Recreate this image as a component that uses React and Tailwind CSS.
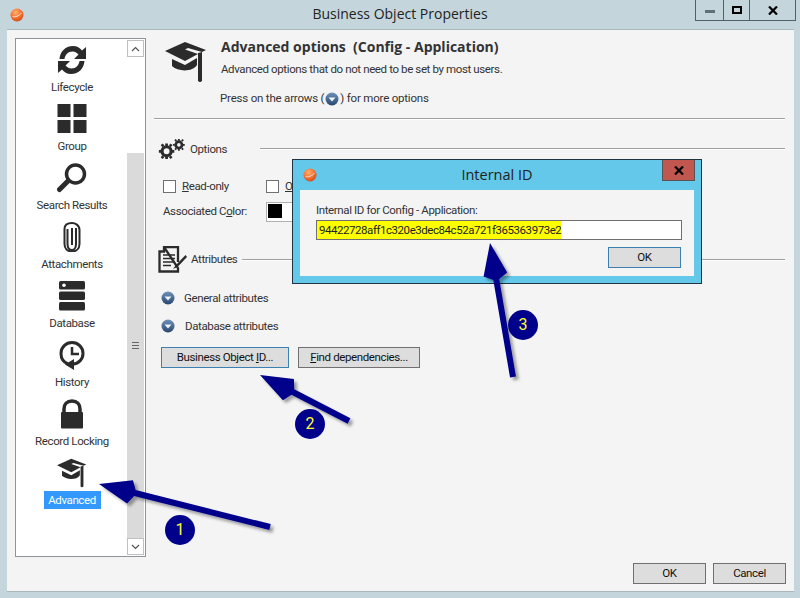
import React from "react";

const sans = "font-['Roboto',Arial,sans-serif]";

function Logo() {
  return (
    <svg width="14" height="14" viewBox="0 0 14 14">
      <defs>
        <radialGradient id="lg" cx="0.4" cy="0.3" r="0.8">
          <stop offset="0" stopColor="#ffb070" />
          <stop offset="0.6" stopColor="#f0682a" />
          <stop offset="1" stopColor="#c0481a" />
        </radialGradient>
      </defs>
      <circle cx="7" cy="7" r="6.5" fill="url(#lg)" />
      <path d="M2.5 8.5C5 9.5 9 8 11.5 5" stroke="#ffe2c8" strokeWidth="1" fill="none" />
    </svg>
  );
}

function Cap({ size = 30 }) {
  return (
    <svg width={size} height={size} viewBox="0 0 42 42" fill="#2b2b2b">
      <path d="M0 10 L20 1 L41 9 L37 11 L23 7 L20 8.5 L33 13 L20 20 Z" />
      <path d="M7 18 L20 24 L32 17 L32 24 C28 31 13 31 7 25 Z" />
      <path d="M33 12 L37 11 L37 40 Q35 42 33 40 Z" />
    </svg>
  );
}

const icons = {
  cycle: (
    <svg width="30" height="30" viewBox="0 0 30 30" fill="#2b2b2b">
      <path d="M2.500 14C3 7 8 1 16 1C20 1 23 3 25 5.500L29 2V14H17L21.500 9.500C19.500 7.500 18 6.500 15.500 6.500C11 6.500 8 10 7.500 14Z" />
      <path d="M27.500 16C27 23 22 29 14 29C10 29 7 27 5 24.500L1 28V16H13L8.500 20.500C10.500 22.500 12 23.500 14.500 23.500C19 23.500 22 20 22.500 16Z" />
    </svg>
  ),
  group: (
    <svg width="30" height="30" viewBox="0 0 30 30" fill="#2b2b2b">
      <rect x="0.500" y="0" width="13" height="13" />
      <rect x="16.500" y="0" width="13" height="13" />
      <rect x="0.500" y="16" width="13" height="13" />
      <rect x="16.500" y="16" width="13" height="13" />
    </svg>
  ),
  search: (
    <svg width="30" height="30" viewBox="0 0 30 30" fill="none" stroke="#2b2b2b">
      <circle cx="18.500" cy="11" r="9" strokeWidth="3.500" />
      <path d="M11 18L2.500 26.500" strokeWidth="5" strokeLinecap="round" />
    </svg>
  ),
  clip: (
    <svg width="30" height="30" viewBox="0 0 30 30" fill="none" stroke="#2b2b2b" strokeWidth="2">
      <path d="M19 6V22C19 26 17 28 15 28C12 28 10.500 26 10.500 22V7" />
      <path d="M15 1C18 1 22.500 3 22.500 8V22C22.500 27 19 29.500 15 29.500C10 29.500 7.500 26 7.500 22V7C7.500 3 10 1 15 1" />
      <path d="M15 6V23" />
    </svg>
  ),
  db: (
    <svg width="30" height="30" viewBox="0 0 30 30" fill="#2b2b2b">
      <rect x="2" y="0" width="26" height="8.500" rx="1.500" />
      <rect x="2" y="10.500" width="26" height="8.500" rx="1.500" />
      <rect x="2" y="21" width="26" height="8.500" rx="1.500" />
      <circle cx="7" cy="4.200" r="1.800" fill="#fff" />
    </svg>
  ),
  history: (
    <svg width="30" height="30" viewBox="0 0 30 30" fill="none" stroke="#2b2b2b">
      <path d="M11 24C6 22 4 18 4 13.500C4 7 9 2.500 15 2.500C21 2.500 26 7 26 13.500C26 19 22 23.500 16 24" strokeWidth="3" />
      <path d="M15 7V14H22" strokeWidth="2.500" />
      <path d="M17 19V30L8 24.500Z" fill="#2b2b2b" stroke="none" />
    </svg>
  ),
  lock: (
    <svg width="30" height="30" viewBox="0 0 30 30" fill="#2b2b2b">
      <path d="M7 14V10C7 5 10 2 15 2C20 2 23 5 23 10V14" fill="none" stroke="#2b2b2b" strokeWidth="3.500" />
      <rect x="4" y="13" width="22" height="16.500" rx="1" />
    </svg>
  ),
  cap: <Cap />,
};

const nav = [
  ["cycle", "Lifecycle"],
  ["group", "Group"],
  ["search", "Search Results"],
  ["clip", "Attachments"],
  ["db", "Database"],
  ["history", "History"],
  ["lock", "Record Locking"],
];

function Expander({ className = "" }) {
  return (
    <svg width="14" height="14" viewBox="0 0 14 14" className={`shrink-0 ${className}`}>
      <defs>
        <linearGradient id="ex" x1="0" y1="0" x2="0" y2="1">
          <stop offset="0" stopColor="#6f93bd" />
          <stop offset="1" stopColor="#27466e" />
        </linearGradient>
      </defs>
      <circle cx="7" cy="7" r="6.500" fill="url(#ex)" />
      <path d="M3.500 5.500H10.500L7 9.500Z" fill="#eef3f8" />
    </svg>
  );
}

function Gears() {
  return (
    <svg width="29" height="20" viewBox="0 0 30 22" fill="#2b2b2b">
      <g>
        <circle cx="8.500" cy="13.500" r="5" fill="none" stroke="#2b2b2b" strokeWidth="3.500" />
        <path d="M7 5h3v3H7zM7 19h3v3H7zM0 12h3v3H0zM14 12h3v3h-3zM2 7l2-2 2 2-2 2zM11 7l2-2 2 2-2 2zM2 20l2-2 2 2-2 2zM11 20l2-2 2 2-2 2z" />
      </g>
      <g>
        <circle cx="22" cy="6.500" r="3.500" fill="none" stroke="#2b2b2b" strokeWidth="3" />
        <path d="M21 0h2v2h-2zM21 11h2v2h-2zM15.500 5.500h2v2h-2zM26.500 5.500h2v2h-2zM17 1.500l1.500-1.500 1.500 1.500-1.500 1.500zM24.500 1.500L26 0l1.500 1.500L26 3zM17 11l1.500-1.500L20 11l-1.500 1.500zM24.500 11L26 9.500l1.500 1.500L26 12.500z" />
      </g>
    </svg>
  );
}

function Doc() {
  return (
    <svg width="29" height="27" viewBox="0 0 29 27" fill="none" stroke="#2b2b2b">
      <path d="M6 1H20V16M20 22V25.500H1.500V5.500H6V1Z M6 1V5.500H1.500" strokeWidth="2.300" />
      <path d="M5 9H17M5 12.500H17M5 16H15M5 19.500H13" strokeWidth="1.500" />
      <path d="M27.500 9L18 19L15 23L19.500 21L29 11Z" fill="#2b2b2b" stroke="none" />
    </svg>
  );
}

function Btn({ children, className = "" }) {
  return (
    <div className={`flex items-center justify-center h-[21px] bg-[#dddddd] border text-[11.5px] text-[#111] ${className}`}>
      <span>{children}</span>
    </div>
  );
}

function Section({ icon, label, labelClass, iconClass, rowClass }) {
  return (
    <div className={`flex items-center ${rowClass}`}>
      <div className={`flex shrink-0 ${iconClass}`}>{icon}</div>
      <span className={`text-[11.5px] text-[#333] shrink-0 ${labelClass}`}>{label}</span>
      <div className="flex-1 h-[2px] bg-[#a0a0a0] border-b border-white" />
    </div>
  );
}

function Arrow({ x1, y1, x2, y2 }) {
  const dx = x2 - x1, dy = y2 - y1;
  const len = Math.hypot(dx, dy);
  const ux = dx / len, uy = dy / len;
  const nx = -uy, ny = ux;
  const hl = 37, hw = 12, sw = 3;
  const bx = x2 - ux * hl, by = y2 - uy * hl;
  const neck = `${bx + nx * sw},${by + ny * sw}`;
  const neck2 = `${bx - nx * sw},${by - ny * sw}`;
  const pts = [
    `${x1 + nx * sw},${y1 + ny * sw}`,
    neck,
    `${bx + ux * 5 + nx * hw},${by + uy * 5 + ny * hw}`,
    `${x2},${y2}`,
    `${bx + ux * 5 - nx * hw},${by + uy * 5 - ny * hw}`,
    neck2,
    `${x1 - nx * sw},${y1 - ny * sw}`,
  ].join(" ");
  return <polygon points={pts} fill="#00008b" filter="url(#arrowShadow)" />;
}

function Badge({ n, className }) {
  return (
    <div className={`absolute w-[30px] h-[30px] rounded-full bg-[#00008b] text-[#ffff33] text-[16px] tracking-normal flex items-center justify-center ${className}`}>
      {n}
    </div>
  );
}

export default function App() {
  return (
    <div className={`relative w-[800px] h-[598px] overflow-hidden bg-[#c4d6dc] ${sans} tracking-[-0.38px] flex flex-col`}>
      {/* title bar */}
      <div className="relative h-[29px] shrink-0 flex items-center">
        <div className="ml-[10px] flex"><Logo /></div>
        <div className="absolute inset-x-0 top-[4px] text-center text-[14px] tracking-normal leading-[20px] text-[#222] font-['Open_Sans',sans-serif]">
          Business Object Properties
        </div>
        <div className="absolute right-[4px] top-0 flex h-[21px] border border-t-0 border-[#555f66]">
          <div className="w-[28px] flex items-center justify-center border-r border-[#555f66]">
            <div className="w-[10px] h-[3px] mt-[3px] bg-[#5f7076]" />
          </div>
          <div className="w-[26px] flex items-center justify-center border-r border-[#555f66]">
            <div className="w-[10px] h-[8px] border-2 border-black" />
          </div>
          <div className="w-[45px] flex items-center justify-center">
            <svg width="10" height="9" viewBox="0 0 10 9"><path d="M1 0.500L9 8.500M9 0.500L1 8.500" stroke="#000" strokeWidth="2.200" /></svg>
          </div>
        </div>
      </div>

      {/* client */}
      <div className="ml-[7px] mr-[6px] h-[562px] bg-[#f4f4f4] border-t border-[#a9b9bf] shadow-[0_1px_0_#aab8bd] flex pl-[8px] pt-[8px]">
        {/* sidebar */}
        <div className="w-[131px] h-[519px] bg-white border border-[#8c9599] flex shrink-0">
          <div className="flex-1 flex flex-col items-center pt-[6px] pl-[1px]">
            {nav.map(([k, l]) => (
              <div key={k} className="h-[59px] flex flex-col items-center shrink-0">
                <div className="h-[30px] flex">{icons[k]}</div>
                <div className="mt-[5px] text-[11.5px] leading-[14px] text-[#333] whitespace-nowrap">{l}</div>
              </div>
            ))}
            <div className="flex flex-col items-center">
              <div className="h-[30px] flex">{icons.cap}</div>
              <div className="mt-[3px] w-[57px] text-center text-[11.5px] leading-[18px] bg-[#3399ff] text-white">Advanced</div>
            </div>
          </div>
          <div className="w-[17px] mt-[1px] mr-[1px] mb-[1px] flex flex-col shrink-0">
            <div className="h-[17px] border border-[#c0c0c0] flex items-center justify-center">
              <svg width="9" height="6" viewBox="0 0 9 6"><path d="M1 5L4.500 1.500L8 5" stroke="#555" strokeWidth="1.200" fill="none" /></svg>
            </div>
            <div className="h-[96px] bg-white" />
            <div className="flex-1 bg-[#dadada] flex items-center justify-center">
              <div className="w-[7px] h-[7px] border-y-[1px] border-[#666] flex items-center"><div className="w-full h-[1px] bg-[#666]" /></div>
            </div>
            <div className="h-[17px] border border-[#c0c0c0] flex items-center justify-center">
              <svg width="9" height="6" viewBox="0 0 9 6"><path d="M1 1L4.500 4.500L8 1" stroke="#555" strokeWidth="1.200" fill="none" /></svg>
            </div>
          </div>
        </div>

        {/* right pane */}
        <div className="relative flex-1 flex flex-col pl-[8px] pr-[9px]">
          <div className="flex h-[80px] shrink-0">
            <div className="ml-[11px] mt-[3px] flex"><Cap size={42} /></div>
            <div className="ml-[14px] flex flex-col">
              <div className="text-[14px] tracking-normal leading-[17px] font-bold font-['Open_Sans',sans-serif] text-[#333] whitespace-pre">Advanced options  (Config - Application)</div>
              <div className="mt-[7px] text-[11.5px] leading-[15px] text-[#333]">Advanced options that do not need to be set by most users.</div>
              <div className="mt-[14px] -ml-[1px] text-[11.5px] tracking-[-0.2px] leading-[15px] text-[#333] whitespace-pre">
                Press on the arrows (<Expander className="inline-block align-[-4px] mx-[1px]" />) for more options
              </div>
            </div>
          </div>
          <div className="h-[2px] bg-[#a0a0a0] border-b border-white shrink-0" />

          <Section icon={<Gears />} label="Options" iconClass="ml-[4px] mr-[3px]" labelClass="w-[70px] mt-[1px]" rowClass="mt-[19px] h-[20px]" />

          <div className="mt-[21px] ml-[9px] flex items-center h-[13px] text-[11.5px] text-[#333]">
            <div className="w-[13px] h-[13px] bg-white border border-[#707070] shrink-0" />
            <span className="ml-[6px] w-[84px]"><u>R</u>ead-only</span>
            <div className="w-[13px] h-[13px] bg-white border border-[#707070] shrink-0" />
            <span className="ml-[6px]"><u>O</u>verride</span>
          </div>

          <div className="mt-[9px] ml-[9px] flex items-center h-[20px] text-[11.5px] text-[#333]">
            <span className="w-[103px]">Associated C<u>o</u>lor:</span>
            <div className="w-[130px] h-[20px] bg-white border border-[#b0b0b0] pl-[1px] pt-[1px]">
              <div className="w-[14px] h-[14px] bg-black" />
            </div>
          </div>

          <Section icon={<Doc />} label="Attributes" iconClass="ml-[4px] mr-[4px]" labelClass="w-[51px]" rowClass="mt-[24px] h-[27px]" />

          <div className="mt-[18px] ml-[7px] flex items-center h-[14px] text-[11.5px] leading-[15px] text-[#333]">
            <Expander />
            <span className="ml-[9px]">General attributes</span>
          </div>
          <div className="mt-[14px] ml-[7px] flex items-center h-[14px] text-[11.5px] leading-[15px] text-[#333]">
            <Expander />
            <span className="ml-[10px]">Database attributes</span>
          </div>

          <div className="mt-[14px] ml-[7px] flex gap-[9px]">
            <Btn className="w-[128px] border-[#3c7fb1]">Business Object <u>I</u>D...</Btn>
            <Btn className="w-[122px] border-[#707070]"><u>F</u>ind dependencies...</Btn>
          </div>

          <div className="flex-1" />
          <div className="flex justify-end gap-[7px] mb-[7px] mr-[-1px]">
            <Btn className="w-[73px] border-[#707070]">OK</Btn>
            <Btn className="w-[73px] border-[#707070]">Cancel</Btn>
          </div>
        </div>
      </div>

      {/* dialog */}
      <div className="absolute left-[292px] top-[159px] w-[410px] h-[125px] bg-[#63c8e9] border border-[#1f3340] flex flex-col">
        <div className="relative h-[30px] shrink-0 flex items-center">
          <div className="ml-[10px] flex"><Logo /></div>
          <div className="absolute inset-x-0 top-[4px] text-center text-[14.500px] tracking-normal leading-[22px] text-[#222] font-['Open_Sans',sans-serif]">Internal ID</div>
          <div className="absolute right-[6px] top-0 w-[33px] h-[21px] bg-[#c2574f] border border-[#555] border-t-0 flex items-center justify-center">
            <svg width="10" height="9" viewBox="0 0 10 9"><path d="M1 0.500L9 8.500M9 0.500L1 8.500" stroke="#000" strokeWidth="2.200" /></svg>
          </div>
        </div>
        <div className="mx-[7px] mb-[7px] flex-1 bg-[#f4f4f4] pl-[16px] pr-[13px] pt-[13px] flex flex-col">
          <div className="text-[11.5px] leading-[15px] text-[#333]">Internal ID for Config - Application:</div>
          <div className="mt-[2px] h-[20px] w-[366px] bg-white border border-[#707070] flex items-stretch">
            <span className="bg-[#ffff00] pl-[2px] text-[11.5px] tracking-[-0.45px] leading-[18px] text-[#222]">94422728aff1c320e3dec84c52a721f365363973e2</span>
          </div>
          <div className="mt-[7px] self-end flex">
            <Btn className="w-[73px] border-[#3c7fb1]">OK</Btn>
          </div>
        </div>
      </div>

      {/* annotations */}
      <svg className="absolute inset-0 pointer-events-none" width="800" height="598">
        <defs>
          <filter id="arrowShadow" x="-20%" y="-20%" width="150%" height="150%">
            <feDropShadow dx="3" dy="3" stdDeviation="1.500" floodColor="#000" floodOpacity="0.35" />
          </filter>
        </defs>
        <Arrow x1={270} y1={527} x2={99} y2={484} />
        <Arrow x1={349} y1={421} x2={260} y2={375} />
        <Arrow x1={513} y1={377} x2={490} y2={243} />
      </svg>
      <Badge n="1" className="left-[165px] top-[515px]" />
      <Badge n="2" className="left-[295px] top-[409px]" />
      <Badge n="3" className="left-[508px] top-[310px]" />
    </div>
  );
}
